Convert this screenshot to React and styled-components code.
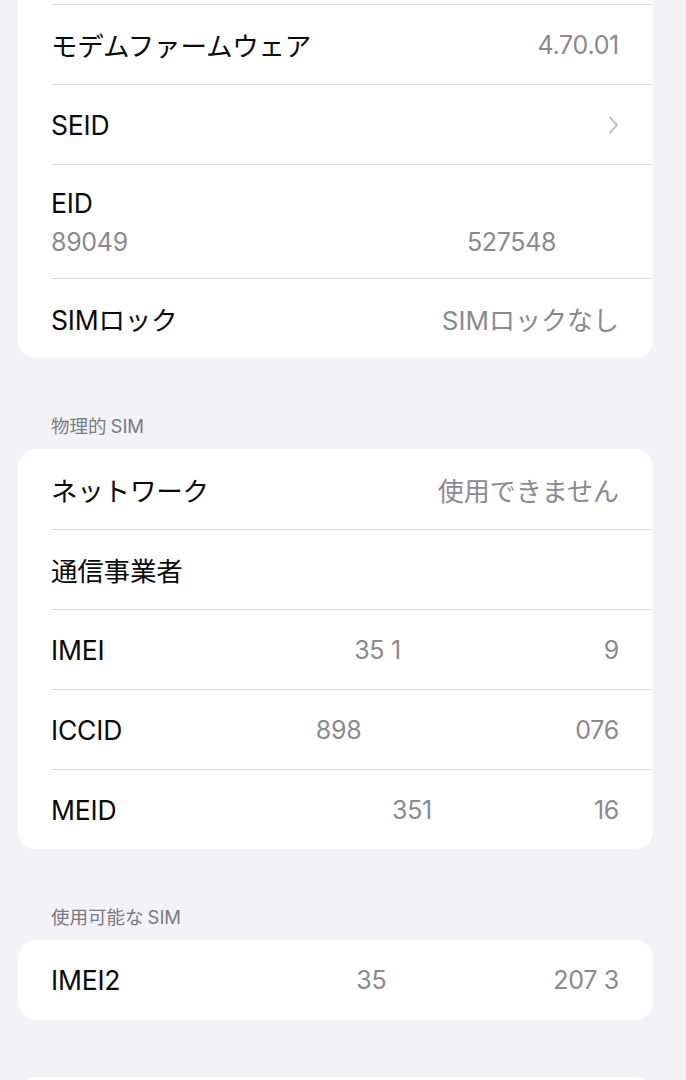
import React from "react";
import styled, { createGlobalStyle } from "styled-components";

const GlobalStyle = createGlobalStyle`
  html, body {
    margin: 0;
    padding: 0;
    background: #f2f2f7;
    overflow: hidden;
  }
  body {
    font-family: "Inter", "Noto Sans CJK JP", sans-serif;
    -webkit-font-smoothing: antialiased;
  }
`;

const Page = styled.div`
  display: flex;
  flex-direction: column;
  margin-top: -76px;
  padding: 0 33px 0 18px;
`;

const SectionHeader = styled.div`
  color: #7a7a7f;
  font-size: 18.5px;
  line-height: 22px;
  margin: 57px 0 12px 33px;
`;

const Latin = styled.span`
  margin-left: 4px;
`;

const Card = styled.div`
  background: #ffffff;
  border-radius: 18px;
  overflow: hidden;
  margin-top: ${({ $gap }) => $gap || 0}px;
`;

const Row = styled.div`
  padding-left: 33px;
`;

const RowInner = styled.div`
  align-items: center;
  border-top: ${({ $first }) => ($first ? "none" : "1px solid #dedee2")};
  box-sizing: border-box;
  display: flex;
  height: ${({ $tall }) => ($tall ? 114 : 80)}px;
  justify-content: space-between;
  padding-right: 34px;
`;

const StackInner = styled(RowInner)`
  align-items: flex-start;
  flex-direction: column;
  justify-content: center;
  gap: 8px;
`;

const Label = styled.span`
  color: #0a0a0a;
  font-size: 26.5px;
  letter-spacing: -0.2px;
`;

const Value = styled.span`
  align-items: baseline;
  color: #8a8a8e;
  display: flex;
  font-size: ${({ $jp }) => ($jp ? 26 : 25)}px;
  letter-spacing: ${({ $jp }) => ($jp ? 0 : -0.3)}px;
  white-space: pre;
`;

const Hidden = styled.span`
  display: inline-block;
  width: ${({ $w }) => $w}px;
`;

const Chevron = () => (
  <svg width="12" height="20" viewBox="0 0 12 20" aria-hidden="true">
    <path
      d="M3 2.5 L10 10 L3 17.5"
      fill="none"
      stroke="#c4c4c8"
      strokeWidth="2"
      strokeLinecap="round"
      strokeLinejoin="round"
    />
  </svg>
);

const Masked = ({ parts }) => (
  <Value>
    {parts.map((p, i) =>
      typeof p === "number" ? <Hidden key={i} $w={p} /> : <span key={i}>{p}</span>
    )}
  </Value>
);

const InfoRow = ({ label, value, jp, first, children }) => (
  <Row>
    <RowInner $first={first}>
      <Label>{label}</Label>
      {children || (value && <Value $jp={jp}>{value}</Value>)}
    </RowInner>
  </Row>
);

export default function App() {
  return (
    <>
      <GlobalStyle />
      <Page>
        <Card>
          <InfoRow first />
          <InfoRow label="モデムファームウェア" value="4.70.01" />
          <InfoRow label="SEID">
            <Chevron />
          </InfoRow>
          <Row>
            <StackInner $tall>
              <Label>EID</Label>
              <Masked parts={["89049", 339, "527548"]} />
            </StackInner>
          </Row>
          <InfoRow label="SIMロック" value="SIMロックなし" jp />
        </Card>

        <SectionHeader>
          物理的<Latin>SIM</Latin>
        </SectionHeader>
        <Card>
          <InfoRow first label="ネットワーク" value="使用できません" jp />
          <InfoRow label="通信事業者" />
          <InfoRow label="IMEI">
            <Masked parts={["35 1", 203, "9"]} />
          </InfoRow>
          <InfoRow label="ICCID">
            <Masked parts={["898", 214, "076"]} />
          </InfoRow>
          <InfoRow label="MEID">
            <Masked parts={["351", 162, "16"]} />
          </InfoRow>
        </Card>

        <SectionHeader>
          使用可能な<Latin>SIM</Latin>
        </SectionHeader>
        <Card>
          <InfoRow first label="IMEI2">
            <Masked parts={["35", 167, "207 3"]} />
          </InfoRow>
        </Card>

        <Card $gap={57}>
          <InfoRow first />
        </Card>
      </Page>
    </>
  );
}
